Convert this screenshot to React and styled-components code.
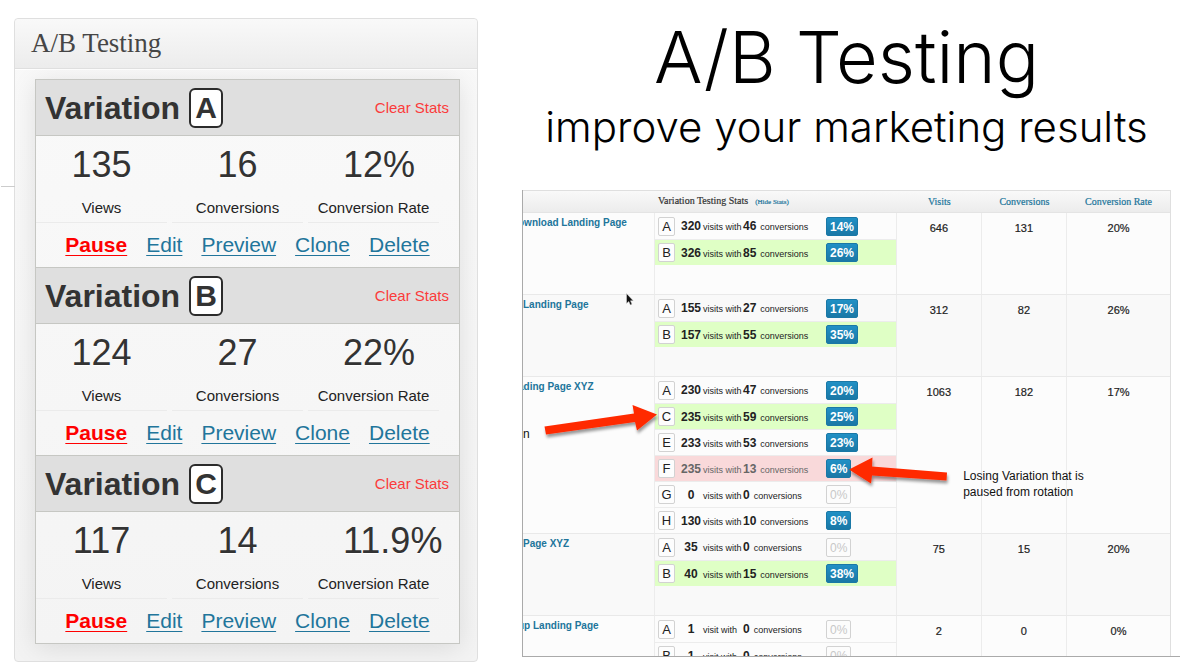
import React from "react";
import styled, { createGlobalStyle, css } from "styled-components";

const sans = '"Liberation Sans", Arial, Helvetica, sans-serif';
const serif = '"Liberation Serif", Georgia, serif';
const light = 'Inter, "Helvetica Neue", sans-serif';

const GlobalStyle = createGlobalStyle`
  *, *::before, *::after { box-sizing: border-box; }
  body { margin: 0; background: #fff; color: #333; font-family: ${sans}; }
  h1, h2, h3, p, ul, dl, dd { margin: 0; padding: 0; }
  ul { list-style: none; }
`;

const Page = styled.main`
  display: grid;
  grid-template-columns: minmax(0, 464fr) minmax(0, 658fr);
  column-gap: 44px;
  align-items: start;
  padding: 18px 20px 4px 14px;
`;

/* ---------- Meta box ---------- */

const Panel = styled.section`
  position: relative;
  border: 1px solid #dfdfdf;
  border-radius: 4px;
  background: linear-gradient(#f9f9f9, #f3f3f3);

  &::before {
    content: "";
    position: absolute;
    top: 167px;
    right: 100%;
    width: 14px;
    border-top: 1px solid #ccc;
  }
`;

const PanelTitle = styled.h2`
  padding: 0 16px;
  border-bottom: 1px solid #dfdfdf;
  box-shadow: 0 1px 0 #fff;
  background: linear-gradient(#f9f9f9, #ececec);
  border-radius: 4px 4px 0 0;
  font: 400 27px/49px ${serif};
  color: #464646;
`;

const PanelBody = styled.div`
  padding: 10px 17px 17px 20px;
  overflow: hidden;
`;

const VariationList = styled.div`
  border: 1px solid #c6c7c3;
  border-bottom: 0;
  box-shadow: 0 4px 24px rgba(0, 0, 0, 0.1);
  background: linear-gradient(#f9f9f9, #f4f4f4);
`;

const Variation = styled.article`
  border-bottom: 1px solid #c6c7c3;
`;

const VariationHead = styled.header`
  display: flex;
  align-items: center;
  justify-content: space-between;
  height: 56px;
  padding: 0 10px 0 9px;
  border-bottom: 1px solid #c6c7c3;
  background: #dfdfdf;
`;

const VariationName = styled.h3`
  display: flex;
  align-items: center;
  gap: 9px;
  font-size: 32px;
  line-height: 40px;
`;

const LetterBox = styled.span`
  width: 34px;
  height: 40px;
  border: 2px solid #2b2b2b;
  border-radius: 6px;
  background: #fff;
  font-size: 30px;
  line-height: 36px;
  text-align: center;
`;

const ClearButton = styled.button`
  padding: 0;
  border: 0;
  background: none;
  font: 15px/20px ${sans};
  color: #fb3b3b;
  cursor: pointer;
`;

const Stats = styled.dl`
  display: grid;
  grid-template-columns: repeat(3, minmax(0, 1fr));
  column-gap: 5px;
  padding-right: 20px;
`;

const Stat = styled.div`
  display: flex;
  flex-direction: column-reverse;
  padding: 8px 0 4px;
  border-bottom: 1px solid #ebebeb;
  text-align: center;
`;

const StatLabel = styled.dt`
  margin-top: 12px;
  font-size: 15px;
  line-height: 20px;
  color: #222;
`;

const StatFigure = styled.dd`
  font-size: 36px;
  line-height: 42px;
  white-space: nowrap;
  text-shadow: 0 1px 0 #fff;
  ${(p) =>
    p.$fromLabel &&
    css`
      padding-left: 35px;
      text-align: left;
    `}
`;

const Actions = styled.nav`
  display: flex;
  justify-content: center;
  gap: 19px;
  font-size: 21px;
  line-height: 44px;
`;

const ActionLink = styled.a`
  color: ${(p) => (p.$strong ? "#f00" : "#21759b")};
  font-weight: ${(p) => (p.$strong ? 700 : 400)};
  text-decoration: underline;
  text-decoration-thickness: 1px;
  text-underline-offset: 3px;
`;

/* ---------- Headline and overview ---------- */

const Headline = styled.header`
  padding-right: 9px;
  text-align: center;
  color: #000;
  white-space: nowrap;
  font-family: ${light};
`;

const Title = styled.h1`
  font-size: 72px;
  font-weight: 300;
  line-height: 78px;
`;

const Tagline = styled.p`
  margin: 7px 0 39px;
  font-size: 42px;
  font-weight: 300;
  line-height: 48px;
`;

const Overview = styled.section`
  position: relative;
  height: 467px;
  padding-right: 9px;
  overflow: hidden;
  border-left: 1px solid #aaa;
  border-bottom: 1px solid #aaa;
`;

const Table = styled.table`
  width: 100%;
  table-layout: fixed;
  border-collapse: separate;
  border-spacing: 0;
  border-top: 1px solid #dfdfdf;
  border-right: 1px solid #dfdfdf;
`;

const Col = styled.col`
  width: ${(p) => p.$share}%;
`;

const HeadCell = styled.th`
  height: 22px;
  padding: 0 3px;
  border-bottom: 1px solid #e4e4e4;
  background: linear-gradient(#f9f9f9, #ececec);
  font: 400 10px/20px ${serif};
  text-align: ${(p) => (p.$left ? "left" : "center")};
  color: ${(p) => (p.$left ? "#333" : "#21759b")};
  -webkit-text-stroke: 0.2px currentColor;
  white-space: nowrap;
`;

const HideLink = styled.a`
  margin-left: 7px;
  font-size: 7px;
  color: #21759b;
  text-decoration: none;
`;

const Row = styled.tr`
  background: ${(p) => (p.$alt ? "#f9f9f9" : "#fcfcfc")};
`;

const Cell = styled.td`
  height: ${(p) => (p.$tall ? 157 : 82)}px;
  padding: 0;
  vertical-align: top;
  overflow: hidden;
  border-bottom: 1px solid #e9e9e9;
  border-right: 1px solid #ececec;
  &:last-child { border-right: 0; }
`;

const NumberCell = styled(Cell)`
  padding-top: 8px;
  font-size: 11px;
  line-height: 14px;
  text-align: center;
  color: #222;
  -webkit-text-stroke: 0.2px currentColor;
`;

const PageLink = styled.a`
  display: block;
  margin-left: ${(p) => (p.$cut ? -5 : 0)}px;
  padding-top: 2px;
  font-size: 10px;
  font-weight: 700;
  line-height: 16px;
  white-space: nowrap;
  text-decoration: none;
  color: #21759b;
`;

const rowTint = { win: "#dfffc5", lose: "#f9d9da" };

const TestRow = styled.li`
  display: flex;
  align-items: center;
  height: 26px;
  padding-left: 3px;
  background: ${(p) => rowTint[p.$state] || "transparent"};
  color: ${(p) => (p.$state === "lose" ? "#666" : "#222")};
  font-size: 9px;
  white-space: nowrap;
  & + & { border-top: 1px solid #ececec; }
`;

const SmallLetter = styled.span`
  flex: none;
  width: 17px;
  height: 19px;
  margin-right: 6px;
  border: 1px solid #d2d2d2;
  border-radius: 2px;
  background: #fdfdfd;
  color: #222;
  font-size: 13px;
  line-height: 17px;
  text-align: center;
`;

const Count = styled.b`
  font-size: 12px;
  text-align: center;
  ${(p) =>
    p.$fixed &&
    css`
      flex: none;
      width: 20px;
    `}
`;

const VisitText = styled.span`
  flex: none;
  width: 40px;
  margin-left: 2px;
`;

const ConversionText = styled.span`
  margin-left: 4px;
`;

const Counts = styled.span`
  display: flex;
  align-items: baseline;
  flex: none;
  width: 145px;
`;

const Badge = styled.span`
  height: 19px;
  padding: 0 3px;
  border: 1px solid ${(p) => (p.$empty ? "#d2d2d2" : "#1a78a6")};
  border-radius: 2px;
  background: ${(p) => (p.$empty ? "#fcfcfc" : "linear-gradient(#2190c5, #1a78a6)")};
  color: ${(p) => (p.$empty ? "#c8c8c8" : "#fff")};
  font-size: 12px;
  font-weight: ${(p) => (p.$empty ? 400 : 700)};
  line-height: 18px;
`;

/* Annotations drawn over the table */

const Note = styled.p`
  position: absolute;
  top: ${(p) => p.$top}px;
  left: ${(p) => p.$left};
  font-size: 12px;
  line-height: 16px;
  color: #111;
`;

const Overlay = styled.svg`
  position: absolute;
  top: 0;
  left: 0;
  width: 658px;
  height: 467px;
  pointer-events: none;
`;

const variations = [
  { letter: "A", views: "135", conversions: "16", rate: "12%" },
  { letter: "B", views: "124", conversions: "27", rate: "22%" },
  { letter: "C", views: "117", conversions: "14", rate: "11.9%" },
];

const pages = [
  {
    name: "ownload Landing Page", cut: true, totals: ["646", "131", "20%"],
    tests: [["A", 320, 46, 14], ["B", 326, 85, 26, "win"]],
  },
  {
    name: "Landing Page", totals: ["312", "82", "26%"],
    tests: [["A", 155, 27, 17], ["B", 157, 55, 35, "win"]],
  },
  {
    name: "ading Page XYZ", cut: true, totals: ["1063", "182", "17%"],
    tests: [
      ["A", 230, 47, 20], ["C", 235, 59, 25, "win"], ["E", 233, 53, 23],
      ["F", 235, 13, 6, "lose"], ["G", 0, 0, 0], ["H", 130, 10, 8],
    ],
  },
  {
    name: "Page XYZ", totals: ["75", "15", "20%"],
    tests: [["A", 35, 0, 0], ["B", 40, 15, 38, "win"]],
  },
  {
    name: "up Landing Page", cut: true, totals: ["2", "0", "0%"],
    tests: [["A", 1, 0, 0], ["B", 1, 0, 0]],
  },
];

function VariationCard({ letter, views, conversions, rate }) {
  return (
    <Variation>
      <VariationHead>
        <VariationName>Variation <LetterBox>{letter}</LetterBox></VariationName>
        <ClearButton type="button">Clear Stats</ClearButton>
      </VariationHead>
      <Stats>
        <Stat><StatLabel>Views</StatLabel><StatFigure>{views}</StatFigure></Stat>
        <Stat><StatLabel>Conversions</StatLabel><StatFigure>{conversions}</StatFigure></Stat>
        <Stat><StatLabel>Conversion Rate</StatLabel><StatFigure $fromLabel>{rate}</StatFigure></Stat>
      </Stats>
      <Actions>
        <ActionLink href="#pause" $strong>Pause</ActionLink>
        <ActionLink href="#edit">Edit</ActionLink>
        <ActionLink href="#preview">Preview</ActionLink>
        <ActionLink href="#clone">Clone</ActionLink>
        <ActionLink href="#delete">Delete</ActionLink>
      </Actions>
    </Variation>
  );
}

function Test({ data: [letter, visits, conversions, rate, state] }) {
  return (
    <TestRow $state={state}>
      <SmallLetter>{letter}</SmallLetter>
      <Counts>
        <Count $fixed>{visits}</Count>
        <VisitText>{visits === 1 ? "visit with" : "visits with"}</VisitText>
        <Count>{conversions}</Count>
        <ConversionText>conversions</ConversionText>
      </Counts>
      <Badge $empty={rate === 0}>{rate}%</Badge>
    </TestRow>
  );
}

export default function App() {
  return (
    <>
      <GlobalStyle />
      <Page>
        <Panel>
          <PanelTitle>A/B Testing</PanelTitle>
          <PanelBody>
            <VariationList>
              {variations.map((v) => <VariationCard key={v.letter} {...v} />)}
            </VariationList>
          </PanelBody>
        </Panel>

        <div>
          <Headline>
            <Title>A/B Testing</Title>
            <Tagline>improve your marketing results</Tagline>
          </Headline>
          <Overview>
            <Table>
              <colgroup>
                <Col $share={20.4} /><Col $share={37.4} /><Col $share={13.1} />
                <Col $share={13.2} /><Col $share={15.9} />
              </colgroup>
              <thead>
                <tr>
                  <HeadCell aria-label="Page" />
                  <HeadCell $left>
                    Variation Testing Stats<HideLink href="#hide">(Hide Stats)</HideLink>
                  </HeadCell>
                  <HeadCell>Visits</HeadCell>
                  <HeadCell>Conversions</HeadCell>
                  <HeadCell>Conversion Rate</HeadCell>
                </tr>
              </thead>
              <tbody>
                {pages.map((page, i) => (
                  <Row key={page.name} $alt={i % 2 === 1}>
                    <Cell $tall={page.tests.length > 2}>
                      <PageLink href="#page" $cut={page.cut}>{page.name}</PageLink>
                    </Cell>
                    <Cell>
                      <ul>{page.tests.map((t) => <Test key={t[0]} data={t} />)}</ul>
                    </Cell>
                    {page.totals.map((n, j) => <NumberCell key={j}>{n}</NumberCell>)}
                  </Row>
                ))}
              </tbody>
            </Table>
            <Note $top={236} $left="0">n</Note>
            <Note $top={278} $left="67%">Losing Variation that is<br />paused from rotation</Note>
            <Overlay viewBox="523 190 658 467" aria-hidden="true">
              <defs>
                <filter id="lift" x="-20%" y="-40%" width="140%" height="200%">
                  <feDropShadow dx="1" dy="3" stdDeviation="1.5" floodColor="#000" floodOpacity="0.4" />
                </filter>
              </defs>
              <g fill="#ff2a05" filter="url(#lift)">
                <path d="M657 414.500L632.500 405L634 413.500L544.500 426.500L546 434.500L635 422L637 430.500Z" />
                <path d="M849 469.500L872.500 457.500L872 466.500L947 472.500L946.500 480.500L872 475.500L871 483.500Z" />
              </g>
              <path d="M626.500 293.500V303.500L628.800 301.500L630.300 305L632 304.200L630.500 300.800H633.300Z" fill="#111" stroke="#ddd" strokeWidth="0.500" />
            </Overlay>
          </Overview>
        </div>
      </Page>
    </>
  );
}
